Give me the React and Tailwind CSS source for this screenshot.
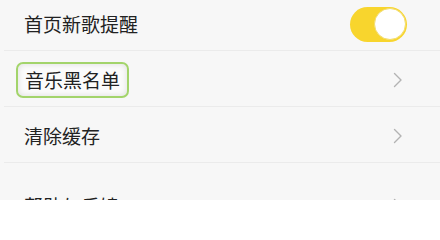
import React from "react";

const Chevron = () => (
  <svg width="10" height="16" viewBox="0 0 10 16" fill="none" className="shrink-0">
    <path d="M1.5 1.5 L8 8 L1.5 14.5" stroke="#b3b3b3" strokeWidth="1.4" strokeLinecap="round" strokeLinejoin="round" />
  </svg>
);

const Toggle = () => (
  <div className="w-[57px] h-[35px] rounded-full bg-[#f8d52d] flex items-center justify-end px-[1px]">
    <div className="w-[32px] h-[32px] rounded-full bg-white border border-[#f2dc6e]" />
  </div>
);

const Row = ({ label, right, highlight }) => (
  <div className="h-[56px] ml-[4px] border-b border-[#ebebeb] flex items-center justify-between pl-[20px] pr-[33px] pt-[3px]">
    {highlight ? (
      <span className="-ml-[8px] px-[7px] h-[36px] flex items-center rounded-[7px] border-2 border-[#a3d46b] bg-[#fbfbfb] shadow-[inset_0_0_6px_rgba(0,0,0,0.12)]">
        {label}
      </span>
    ) : (
      <span>{label}</span>
    )}
    {right}
  </div>
);

export default function App() {
  return (
    <div
      className="w-[440px] h-[200px] overflow-hidden bg-[#f7f7f7] text-[19px] text-[#222]"
      style={{ fontFamily: '"Noto Sans CJK SC", "Noto Sans", sans-serif' }}
    >
      <div className="-mt-[5px]">
        <Row label="首页新歌提醒" right={<Toggle />} />
        <Row label="音乐黑名单" highlight right={<span className="pr-[4px]"><Chevron /></span>} />
        <Row label="清除缓存" right={<span className="pr-[4px]"><Chevron /></span>} />
        <div className="mt-[14px]">
          <Row label="帮助与反馈" right={<span className="pr-[4px]"><Chevron /></span>} />
        </div>
      </div>
    </div>
  );
}
